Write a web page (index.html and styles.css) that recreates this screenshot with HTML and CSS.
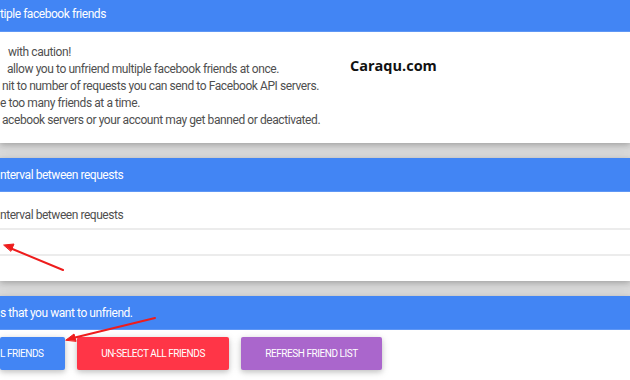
FILE: index.html
```html
<!DOCTYPE html>
<html lang="en">

<head>
    <meta charset="UTF-8">
    <title>Unfriend multiple facebook friends</title>
    <link rel="stylesheet" href="styles.css">
</head>

<body>
    <div class="page">

        <div class="card">
            <div class="card-head">tiple facebook friends</div>
            <div class="card-body warn">
                <p class="l1">with caution!</p>
                <p class="l2">allow you to unfriend multiple facebook friends at once.</p>
                <p class="l3">nit to number of requests you can send to Facebook API servers.</p>
                <p class="l4">e too many friends at a time.</p>
                <p class="l5">acebook servers or your account may get banned or deactivated.</p>
                <span class="brand">Caraqu.com</span>
            </div>
        </div>

        <div class="card">
            <div class="card-head">nterval between requests</div>
            <div class="row first">nterval between requests</div>
            <div class="row"></div>
            <div class="row end"></div>
        </div>

        <div class="card last">
            <div class="card-head">s that you want to unfriend.</div>
            <div class="btns">
                <button class="btn btn-blue">L FRIENDS</button>
                <button class="btn btn-red">UN-SELECT ALL FRIENDS</button>
                <button class="btn btn-purple">REFRESH FRIEND LIST</button>
            </div>
        </div>

        <!-- red arrows drawn on top of the screenshot -->
        <svg class="arrows" width="630" height="380" viewBox="0 0 630 380">
            <g stroke="#ee1c1c" stroke-width="2" fill="#ee1c1c" stroke-linecap="round">
                <line x1="63" y1="270" x2="10" y2="248" />
                <polygon points="4,245 14,244 11,251" stroke-width="1" />
                <line x1="155" y1="318" x2="73" y2="338" />
                <polygon points="66,340 74,334 76,341" stroke-width="1" />
            </g>
        </svg>
    </div>
</body>

</html>
```

FILE: styles.css
```css
* {
    margin: 0;
    padding: 0;
    box-sizing: border-box;
}

body {
    background: #dadada;
    font-family: Roboto, "Liberation Sans", sans-serif;
    overflow: hidden;
}

.page {
    position: relative;
    width: 630px;
    height: 380px;
    display: flex;
    flex-direction: column;
    gap: 15px;
}

.card {
    background: #fff;
    box-shadow: 0 2px 5px rgba(0, 0, 0, .16), 0 2px 10px rgba(0, 0, 0, .12);
}

.card.last {
    flex: 1;
}

.card-head {
    background: #4285f4;
    color: #fff;
    font-size: 12px;
    letter-spacing: -0.45px;
    height: 34px;
    line-height: 34px;
    border-bottom: 1px solid #5f97f5;
}

.card:first-child .card-head {
    height: 32px;
    line-height: 29px;
}

.warn {
    position: relative;
    height: 111px;
    padding-top: 12px;
    color: #4f4f4f;
    font-size: 12px;
    letter-spacing: -0.42px;
    line-height: 17px;
}

.l1 { padding-left: 8px; }
.l2 { padding-left: 7px; }
.l3 { padding-left: 2px; }
.l4 { padding-left: 0; }
.l5 { padding-left: 2px; }

.brand {
    position: absolute;
    left: 350px;
    top: 25px;
    color: #111;
    font-family: "Open Sans", sans-serif;
    font-weight: 700;
    font-size: 14.5px;
    letter-spacing: 0;
}

.row {
    height: 26px;
    border-top: 2px solid #ececec;
}

.row.end {
    height: 27px;
}

.row.first {
    height: 36px;
    border-top: 0;
    color: #4f4f4f;
    font-size: 12px;
    letter-spacing: -0.45px;
    line-height: 46px;
}

.btns {
    display: flex;
    gap: 12px;
    padding-top: 7px;
}

.btn {
    border: 0;
    color: #fff;
    font-family: Roboto, sans-serif;
    font-size: 10px;
    letter-spacing: -0.45px;
    white-space: nowrap;
    height: 33px;
    border-radius: 2px;
    box-shadow: 0 2px 5px rgba(0, 0, 0, .16), 0 2px 10px rgba(0, 0, 0, .12);
}

.btn-blue {
    background: #4285f4;
    width: 65px;
    text-align: right;
    padding-right: 24px;
}

.btn-red {
    background: #ff3547;
    width: 152px;
}

.btn-purple {
    background: #aa66cc;
    width: 141px;
}

.arrows {
    position: absolute;
    left: 0;
    top: 0;
}
```
